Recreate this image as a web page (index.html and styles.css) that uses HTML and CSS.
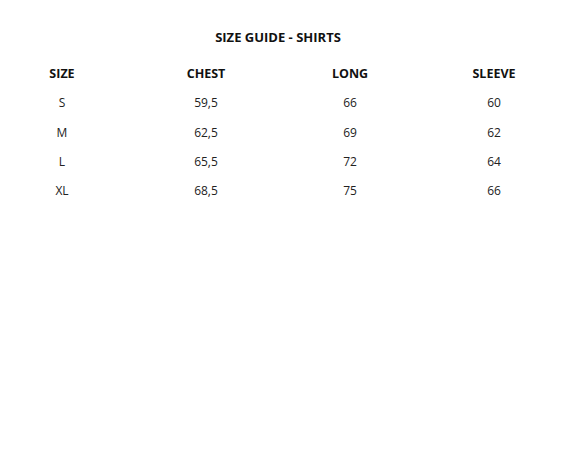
FILE: index.html
```html
<!DOCTYPE html>
<html>
<head>
<meta charset="utf-8">
<link rel="stylesheet" href="styles.css">
</head>
<body>
<div class="guide">
  <h2 class="title">SIZE GUIDE - SHIRTS</h2>
  <div class="table">
    <div class="cell head">SIZE</div><div class="cell head">CHEST</div><div class="cell head">LONG</div><div class="cell head">SLEEVE</div>
    <div class="cell">S</div><div class="cell">59,5</div><div class="cell">66</div><div class="cell">60</div>
    <div class="cell">M</div><div class="cell">62,5</div><div class="cell">69</div><div class="cell">62</div>
    <div class="cell">L</div><div class="cell">65,5</div><div class="cell">72</div><div class="cell">64</div>
    <div class="cell">XL</div><div class="cell">68,5</div><div class="cell">75</div><div class="cell">66</div>
  </div>
</div>
</body>
</html>
```

FILE: styles.css
```css
html, body {
  margin: 0;
  padding: 0;
  background: #fff;
}
body {
  font-family: "Open Sans", "DejaVu Sans", sans-serif;
  color: #111;
}
.guide {
  width: 556px;
  padding-top: 28px;
}
.title {
  margin: 0 0 13px;
  font-size: 13px;
  font-weight: 700;
  line-height: 18px;
  text-align: center;
  color: #111;
}
.table {
  display: grid;
  grid-template-columns: repeat(4, 124px);
  column-gap: 20px;
}
.cell {
  text-align: center;
  font-size: 12px;
  line-height: 29.3px;
  color: #222;
}
.cell.head {
  font-size: 12.5px;
  font-weight: 700;
  color: #111;
}
```
